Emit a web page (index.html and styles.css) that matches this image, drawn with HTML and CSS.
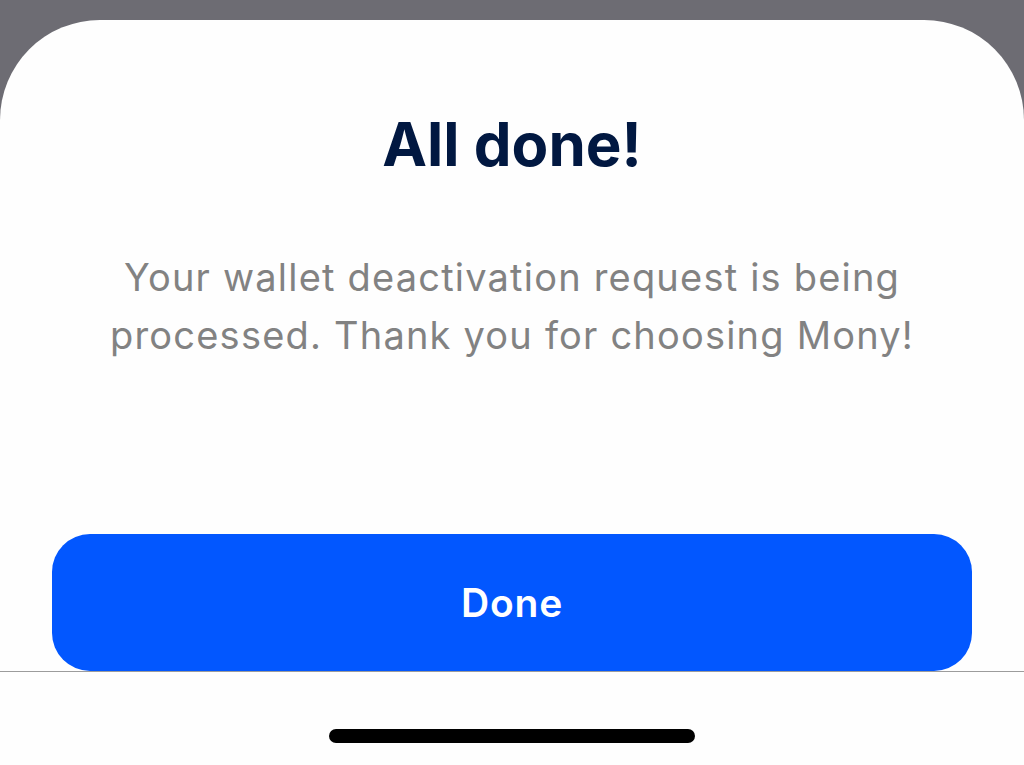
FILE: index.html
```
<!DOCTYPE html>
<html>
<head>
<meta charset="utf-8">
<link rel="stylesheet" href="styles.css">
</head>
<body>
<div class="sheet">
  <div class="content">
    <h1 class="title">All done!</h1>
    <p class="message">Your wallet deactivation request is being<br>processed. Thank you for choosing Mony!</p>
    <button class="done-btn">Done</button>
  </div>
  <div class="home-bar">
    <div class="home-indicator"></div>
  </div>
</div>
</body>
</html>
```
FILE: styles.css
```
html, body {
  margin: 0;
  padding: 0;
  height: 100%;
}
body {
  background: #6d6c73;
  font-family: "Inter", "Roboto", sans-serif;
  overflow: hidden;
}
.sheet {
  margin-top: 20px;
  height: 745px;
  background: #fefefe;
  border-radius: 100px 100px 0 0;
  display: flex;
  flex-direction: column;
  overflow: hidden;
}
.content {
  flex: 1;
  display: flex;
  flex-direction: column;
  align-items: center;
  padding: 0 52px;
}
.title {
  margin: 91px 0 0;
  font-size: 60px;
  line-height: 66px;
  font-weight: 700;
  color: #011841;
  letter-spacing: 0;
}
.message {
  margin: 71px 0 0;
  font-size: 38px;
  line-height: 58px;
  color: #828282;
  text-align: center;
  font-weight: 400;
  letter-spacing: 1.2px;
}
.done-btn {
  margin-top: auto;
  width: 100%;
  height: 137px;
  border: none;
  border-radius: 38px;
  background: #0257ff;
  color: #ffffff;
  font-family: inherit;
  font-size: 39px;
  font-weight: 600;
  letter-spacing: 0.8px;
}
.home-bar {
  height: 93px;
  border-top: 1px solid #9c9c9c;
  display: flex;
  justify-content: center;
  align-items: flex-start;
}
.home-indicator {
  margin-top: 57px;
  width: 366px;
  height: 14px;
  border-radius: 7px;
  background: #000;
}
```
